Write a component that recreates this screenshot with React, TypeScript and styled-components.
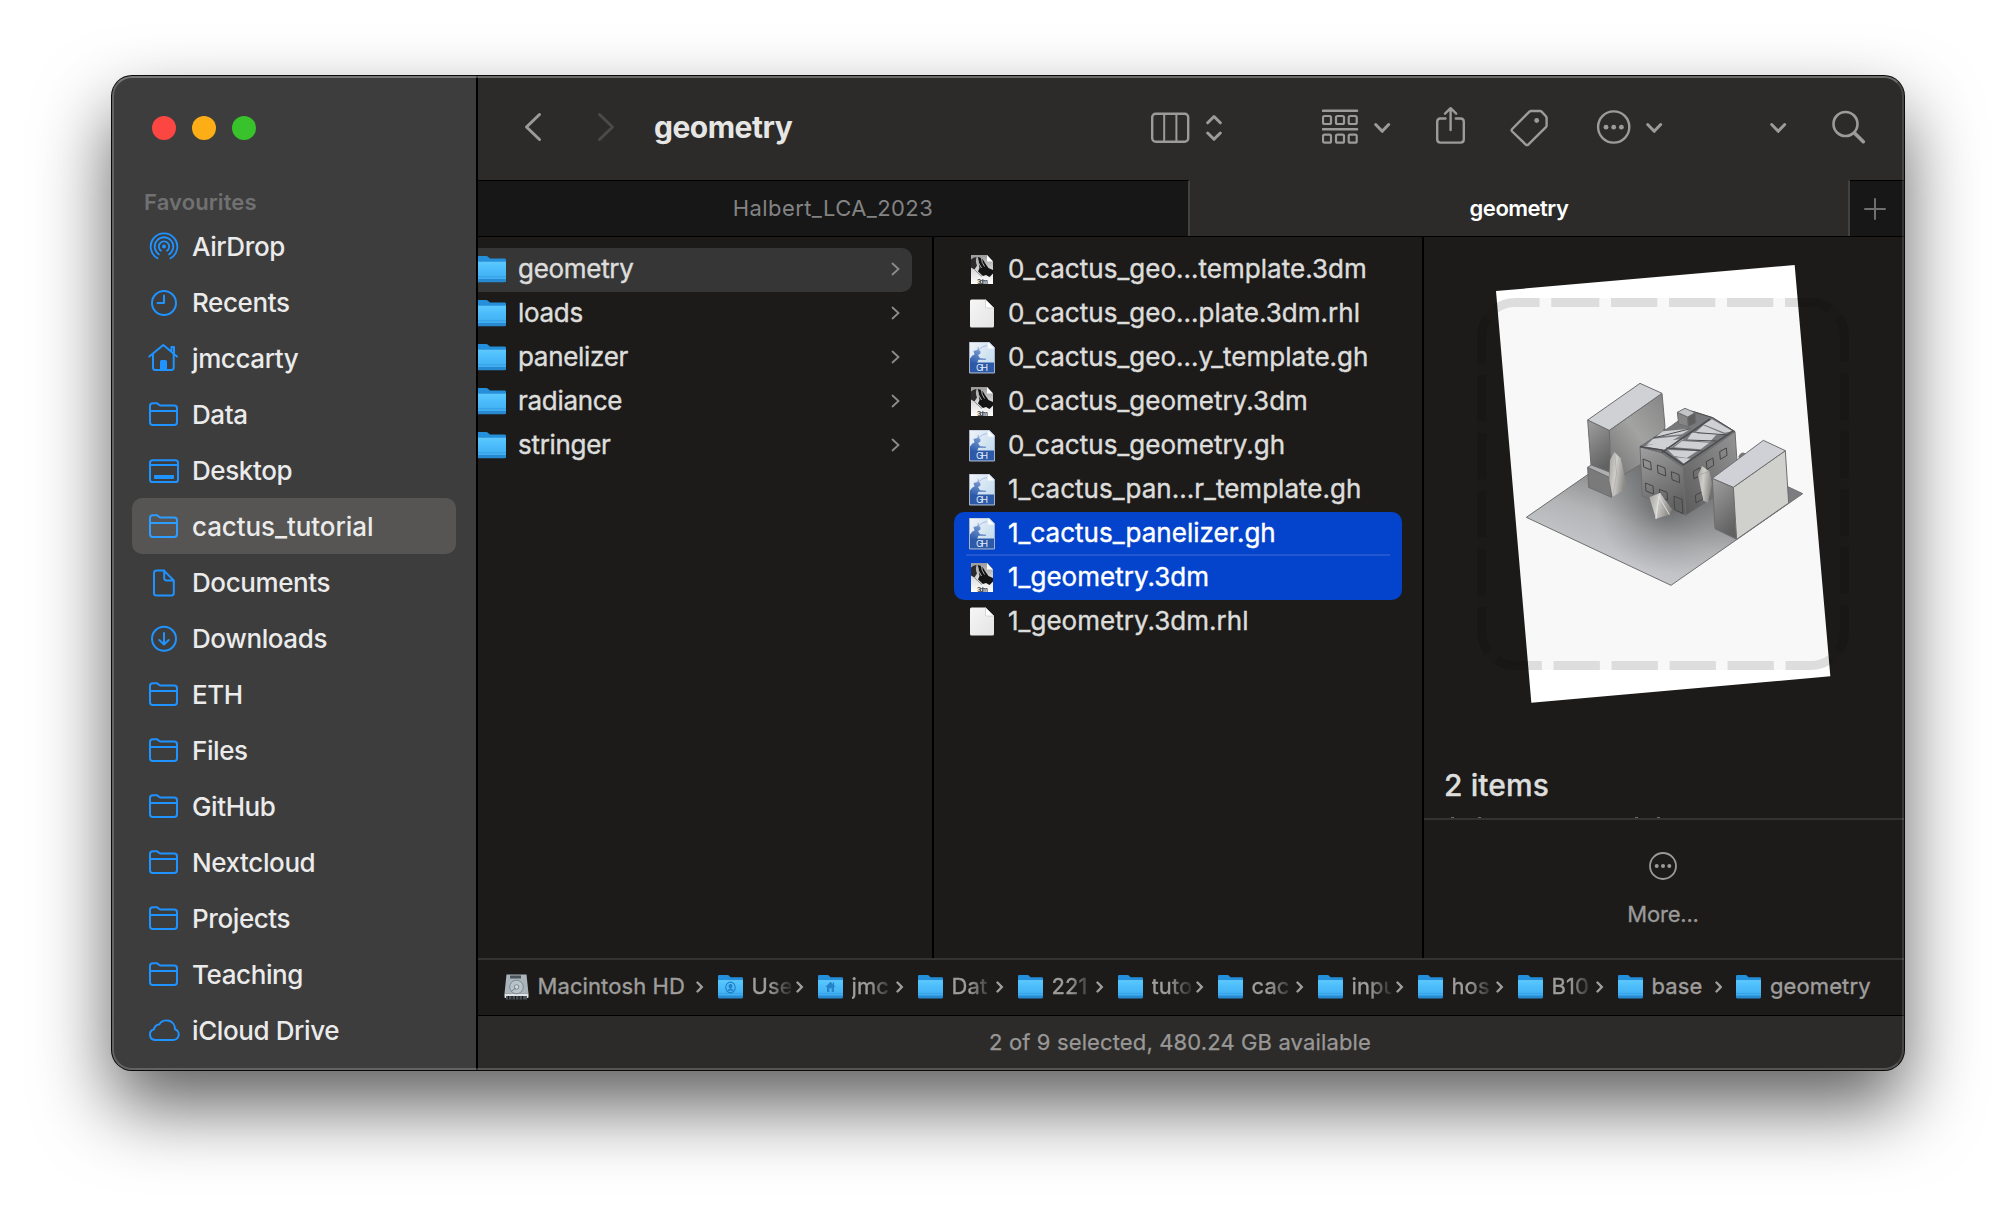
import React from "react";
import styled, { createGlobalStyle, css } from "styled-components";

const Global = createGlobalStyle`
  * { box-sizing: border-box; }
  html, body { margin: 0; background: #fff; }
  svg { display: block; flex: none; }
`;

const Desktop = styled.div`
  width: 2016px;
  height: 1218px;
  padding: 76px 112px 148px;
  overflow: hidden;
  background: #fff;
  font-family: Inter, "Liberation Sans", sans-serif;
  white-space: nowrap;
`;

const Window = styled.div`
  position: relative;
  display: flex;
  height: 994px;
  border-radius: 20px;
  background: #000;
  box-shadow: 0 0 0 1px #0a0a0a, 0 36px 74px rgba(0, 0, 0, 0.63);
  &::after {
    content: "";
    position: absolute;
    inset: 0;
    border-radius: 20px;
    border: 2px solid rgba(255, 255, 255, 0.13);
    border-top-color: rgba(255, 255, 255, 0.3);
    border-bottom-color: rgba(255, 255, 255, 0.2);
    border-left-color: rgba(255, 255, 255, 0.2);
    pointer-events: none;
  }
`;

/* ---------- sidebar ---------- */

const Sidebar = styled.nav`
  display: flex;
  flex-direction: column;
  width: 364px;
  margin-right: 2px;
  padding: 0 20px;
  background: #3d3d3d;
  border-radius: 20px 0 0 20px;
`;

const Lights = styled.div`
  display: flex;
  gap: 16px;
  padding: 40px 0 0 20px;
`;

const Light = styled.span<{ $color: string }>`
  width: 24px;
  height: 24px;
  border-radius: 50%;
  background: ${(p) => p.$color};
`;

const SectionLabel = styled.h2`
  margin: 47px 0 1px 12px;
  font-size: 22px;
  font-weight: 600;
  line-height: 30px;
  letter-spacing: 0.12px;
  color: #717171;
`;

const Place = styled.a<{ $active?: boolean }>`
  display: flex;
  align-items: center;
  gap: 12px;
  height: 56px;
  padding-left: 16px;
  border-radius: 10px;
  background: ${(p) => (p.$active ? "#565553" : "transparent")};
  color: #ebebeb;
  font-size: 26px;
  font-weight: 500;
  letter-spacing: ${(p) => (p.$active ? "-0.08px" : "-0.4px")};
  svg { color: ${(p) => (p.$active ? "#2d9dff" : "#1f93ff")}; }
`;

/* ---------- main area ---------- */

const Main = styled.main`
  display: flex;
  flex-direction: column;
  width: 1426px;
  border-radius: 0 20px 20px 0;
  overflow: hidden;
  background: #1c1b19;
`;

const Toolbar = styled.header`
  display: flex;
  align-items: center;
  height: 104px;
  padding: 0 37px 0 44px;
  background: #2c2b29;
  color: #9c9b99;
`;

const WindowTitle = styled.h1`
  flex: 1;
  margin: 0 0 2px 34px;
  font-size: 30px;
  font-weight: 700;
  letter-spacing: -0.5px;
  color: #e6e6e5;
`;

const ToolGroup = styled.div<{ $after: number; $gap?: number }>`
  display: flex;
  align-items: center;
  gap: ${(p) => p.$gap ?? 0}px;
  margin-right: ${(p) => p.$after}px;
`;

const TabBar = styled.div`
  display: grid;
  grid-template-columns: 712px 660px 54px;
  height: 57px;
  background: #2c2b29;
  border-bottom: 1px solid #000;
`;

const Tab = styled.div<{ $active?: boolean }>`
  display: flex;
  align-items: center;
  justify-content: center;
  padding-bottom: 2px;
  border-top: 1px solid #000;
  border-right: 2px solid #414140;
  background: #171717;
  font-size: 22px;
  letter-spacing: 0.4px;
  color: #838383;
  ${(p) =>
    p.$active &&
    css`
      border-top-color: #2c2b29;
      background: #2c2b29;
      color: #fff;
      font-weight: 600;
      letter-spacing: -0.5px;
    `}
`;

const NewTab = styled.button`
  display: flex;
  align-items: center;
  justify-content: center;
  padding: 0 4px 0 0;
  border: 0;
  border-top: 1px solid #000;
  background: #171717;
  color: #6f6f6e;
`;

const Browser = styled.section`
  display: grid;
  grid-template-columns: 454px 488px 1fr;
  gap: 2px;
  height: 721px;
  background: #000;
`;

const Column = styled.div`
  display: flex;
  flex-direction: column;
  padding-top: 11px;
  overflow: hidden;
  background: #1c1b19;
`;

const FolderRow = styled.div<{ $active?: boolean }>`
  display: flex;
  align-items: center;
  height: 44px;
  margin-right: 20px;
  padding: 0 12px 0 0;
  border-radius: 0 10px 10px 0;
  background: ${(p) => (p.$active ? "#363636" : "transparent")};
  color: #8c8c8b;
`;

const FolderGlyph = styled.span`
  margin: -1px 12px 0 -4px;
`;

const RowChevron = styled.svg`
  margin-bottom: 2px;
`;

const FolderName = styled.span`
  flex: 1;
  padding-bottom: 3px;
  font-size: 26px;
  letter-spacing: -0.3px;
  -webkit-text-stroke: 0.4px;
  color: #dddddc;
`;

const FileList = styled.div`
  padding: 0 20px;
`;

const FileRow = styled.div<{ $selected?: boolean; $first?: boolean; $last?: boolean }>`
  display: flex;
  align-items: center;
  gap: 13px;
  height: 44px;
  padding: 0 12px 0 15px;
  color: ${(p) => (p.$selected ? "#fff" : "#dddddc")};
  background: ${(p) => (p.$selected ? "#0443cb" : "transparent")};
  border-radius: ${(p) => `${p.$first ? "10px 10px" : "0 0"} ${p.$last ? "10px 10px" : "0 0"}`};
  ${(p) =>
    p.$first &&
    css`
      background: linear-gradient(#2257d0, #2257d0) 12px 42px / 424px 2px no-repeat #0443cb;
    `}
`;

const FileName = styled.span`
  padding-bottom: 3px;
  font-size: 26px;
  letter-spacing: 0.02px;
  -webkit-text-stroke: 0.4px;
`;

const Preview = styled.aside`
  display: flex;
  flex-direction: column;
  background: #1c1b19;
`;

const Summary = styled.div`
  display: flex;
  flex-direction: column;
  height: 583px;
  border-bottom: 2px solid #323231;
`;

const SummaryTitle = styled.div`
  flex: 1;
  padding: 30px 0 0 20px;
  font-size: 30px;
  font-weight: 500;
  line-height: 36px;
  letter-spacing: 0.1px;
  -webkit-text-stroke: 0.3px;
  color: #dededd;
`;

const Actions = styled.div`
  display: flex;
  flex: 1;
  flex-direction: column;
  align-items: center;
  gap: 19px;
  padding: 30px 2px 0 0;
  color: #9b9a99;
  font-size: 22px;
  letter-spacing: -0.2px;
  -webkit-text-stroke: 0.3px;
`;

const PathBar = styled.footer`
  display: flex;
  align-items: center;
  height: 58px;
  padding: 0 0 2px 25.5px;
  border-top: 2px solid #333331;
  border-bottom: 1px solid #000;
  color: #9f9e9d;
  font-size: 22px;
`;

const Crumb = styled.div`
  display: flex;
  align-items: center;
  margin-right: 14px;
`;

const CrumbName = styled.span<{ $width: number; $fade?: boolean }>`
  width: ${(p) => p.$width}px;
  margin: 0 5px 0 9px;
  padding-bottom: 2px;
  letter-spacing: 0.1px;
  -webkit-text-stroke: 0.35px;
  ${(p) =>
    p.$fade &&
    css`
      mask-image: linear-gradient(90deg, #000 45%, rgba(0, 0, 0, 0.15) 100%);
    `}
`;

const StatusBar = styled.footer`
  display: flex;
  flex: 1;
  align-items: center;
  justify-content: center;
  padding: 0 22px 2px 0;
  background: #2c2b29;
  font-size: 22px;
  letter-spacing: 0.13px;
  -webkit-text-stroke: 0.25px;
  color: #999897;
`;

/* ---------- icons ---------- */

type Kind = "airdrop" | "clock" | "home" | "folder" | "desktop" | "doc" | "down" | "cloud";

const placeShapes: Record<Kind, React.ReactNode> = {
  airdrop: (
    <g strokeWidth="1.8">
      <circle cx="16" cy="16.5" r="2" fill="currentColor" stroke="none" />
      <path d="M13 20.8A5.2 5.2 0 1 1 19 20.8" />
      <path d="M11 24.4A9.3 9.3 0 1 1 21 24.4" />
      <path d="M9.5 28.3A13.3 13.3 0 1 1 22.5 28.3" />
    </g>
  ),
  clock: (
    <>
      <circle cx="16" cy="17" r="12" />
      <path d="M16 9.5V17H9.5" />
    </>
  ),
  home: (
    <>
      <path d="M1.3 14.5 15.3 3 29 14.5M5 12v13.5Q5 28 7.500 28H23Q25.700 28 25.700 25.500V12M23.500 9V5H26v7" />
      <path d="M12 28V19.500Q12 18 13.500 18H17.500Q19 18 19 19.500V28Z" fill="currentColor" stroke="none" />
    </>
  ),
  folder: <path d="M2 13H29M2 8Q2 5.300 4.700 5.300H8.500C10.500 5.300 10.800 7.600 13 7.600H26.300Q29 7.600 29 10.300V24.300Q29 27 26.300 27H4.700Q2 27 2 24.300Z" />,
  desktop: (
    <>
      <rect x="2" y="6.200" width="28" height="21.800" rx="2.600" />
      <path d="M2 11H30" />
      <rect x="6" y="21" width="20" height="4" rx="1" fill="currentColor" stroke="none" />
    </>
  ),
  doc: <path d="M16 4.600H8.500Q6 4.600 6 7.100V27Q6 29.500 8.500 29.500H23.300Q25.800 29.500 25.800 27V14.500ZM16.200 4.600V12Q16.200 14.400 18.600 14.400H25.800" />,
  down: (
    <>
      <circle cx="16" cy="16.800" r="12" />
      <path d="M16 11V22.300M11.300 18 16 22.500 20.700 18" />
    </>
  ),
  cloud: <path d="M7 26H25A5.500 5.500 0 0 0 27 15.300A8.500 8.500 0 0 0 11.200 10.600A5 5 0 0 0 6 15.400A5.400 5.400 0 0 0 7 26Z" />,
};

const PlaceIcon = ({ kind }: { kind: Kind }) => (
  <svg width="32" height="32" viewBox="0 0 32 32" fill="none" stroke="currentColor" strokeWidth="2" strokeLinecap="round" strokeLinejoin="round">
    {placeShapes[kind]}
  </svg>
);

const ToolIcon = ({ x, w, sw = 2.4, children }: { x: number; w: number; sw?: number; children: React.ReactNode }) => (
  <svg width={w} height="44" viewBox={`${x} 106 ${w} 44`} fill="none" stroke="currentColor" strokeWidth={sw} strokeLinecap="round" strokeLinejoin="round">
    {children}
  </svg>
);

const MenuChevron = () => (
  <ToolIcon x={1374} w={17} sw={3}>
    <path d="M1375.700 124.500 1382.200 131.300 1388.700 124.500" />
  </ToolIcon>
);

const BlueFolder = ({ w, h, badge }: { w: number; h: number; badge?: "user" | "home" }) => (
  <svg width={w} height={h} viewBox="0 0 32 27" preserveAspectRatio="none">
    <defs>
      <linearGradient id="folderFront" x1="0" y1="0" x2="0" y2="1">
        <stop offset="0" stopColor="#5ac9ff" />
        <stop offset="0.350" stopColor="#4cbcfb" />
        <stop offset="1" stopColor="#3dabee" />
      </linearGradient>
    </defs>
    <path d="M1.500 0H12Q13.500 0 14.500 1.200L16 2.600H30.500Q32 2.600 32 4V25H0V1.500Q0 0 1.500 0Z" fill="#2490dc" />
    <path d="M0 6.200H32V24.500Q32 26 30.500 26H1.500Q0 26 0 24.500Z" fill="url(#folderFront)" />
    <path d="M0 6.200H32" stroke="#74d2ff" strokeWidth="0.700" />
    <path d="M0 20.800H32" stroke="#3197dc" strokeWidth="0.700" />
    <path d="M0 23H32V24.500Q32 26.300 30.500 26.300H1.500Q0 26.300 0 24.500Z" fill="#2789cf" />
    {badge === "user" && (
      <g fill="none" stroke="#1f7fc6" strokeWidth="1.400">
        <circle cx="16" cy="14" r="6" />
        <circle cx="16" cy="12.500" r="1.800" fill="#1f7fc6" />
        <path d="M13 17.300Q16 14.800 19 17.300" fill="#1f7fc6" />
      </g>
    )}
    {badge === "home" && <path d="M16 7.500 9.500 13.500H11.500V19H14.500V15H17.500V19H20.500V13.500H22.500L20.500 11.500V8.500H19V10Z" fill="#2583ca" />}
  </svg>
);

const DiskIcon = () => (
  <svg width="25" height="26" viewBox="0 0 25 26">
    <path d="M2.500 0.500H22.500L24.500 19.500H0.500Z" fill="#a9b4bb" />
    <path d="M0.500 19.500H24.500V23Q24.500 24 23.500 24H1.500Q0.500 24 0.500 23Z" fill="#dfe5e8" />
    <path d="M2 22H23V25.500H2Z" fill="#4d5459" />
    <path d="M4.500 22V25.500M8 22V25.500M11.500 22V25.500M15 22V25.500M18.500 22V25.500" stroke="#15171a" strokeWidth="1.200" />
    <rect x="6" y="1.500" width="11" height="3" rx="0.500" fill="#4a5359" />
    <circle cx="12.500" cy="13" r="6.800" fill="#b9c4ca" stroke="#7d8990" strokeWidth="1" />
    <circle cx="12.500" cy="13" r="2.300" fill="#cfd8dc" stroke="#7d8990" strokeWidth="1" />
    <path d="M7 17.500 12 14" stroke="#75828a" strokeWidth="1" />
  </svg>
);

type FileKind = "3dm" | "rhl" | "gh";

const FileIcon = ({ kind }: { kind: FileKind }) => (
  <svg width="26" height="32" viewBox="0 0.5 26 32">
    <defs>
      <linearGradient id="paper" x1="0" y1="0" x2="1" y2="1">
        <stop offset="0" stopColor="#f6f6f6" />
        <stop offset="1" stopColor="#e4e4e4" />
      </linearGradient>
      <linearGradient id="rhino" x1="0" y1="0" x2="0" y2="1">
        <stop offset="0" stopColor="#9a9a9a" />
        <stop offset="0.600" stopColor="#e2e2e2" />
        <stop offset="1" stopColor="#ffffff" />
      </linearGradient>
      <linearGradient id="hopper" x1="0" y1="0" x2="1" y2="1">
        <stop offset="0" stopColor="#f0f4fb" />
        <stop offset="1" stopColor="#b9d6ea" />
      </linearGradient>
      <linearGradient id="hopperBody" x1="0.600" y1="0" x2="0.200" y2="1">
        <stop offset="0" stopColor="#8aa6d6" />
        <stop offset="1" stopColor="#315fae" />
      </linearGradient>
    </defs>
    {kind === "rhl" && (
      <>
        <path d="M2.500 2H16.500L25 10.500V28.500Q25 30 23.500 30H2.500Q1 30 1 28.500V3.500Q1 2 2.500 2Z" fill="url(#paper)" />
        <path d="M16.500 2V9.500Q16.500 10.500 17.500 10.500H25Z" fill="#fff" stroke="#bdbdbd" strokeWidth="0.600" />
      </>
    )}
    {kind === "3dm" && (
      <>
        <path d="M2 1.500H18L24 8V30.500H2Z" fill="url(#rhino)" />
        <path d="M18 1.500V8H24Z" fill="#fff" />
        <path d="M2 6Q4 3.500 7.500 3.500Q6 8 8 12L5.500 16L2 14Z" fill="#2b2b2b" />
        <path d="M8.500 3.500Q13.500 3.500 16 9.500L19.500 14.500L24 16.500V20L20.500 23.500L17 21.500L14 22.500L9 18L10.500 14.500Q9.500 8 8.500 3.500Z" fill="#141414" />
        <path d="M8.500 4Q8.500 9 12.500 14.500M12.500 4.500Q12.500 9 15.500 13" stroke="#bdbdbd" strokeWidth="0.900" fill="none" />
        <path d="M5.500 16Q9 20 13 23" stroke="#8a8a8a" strokeWidth="1" fill="none" />
        <text x="8" y="30" fontSize="6.500" fontWeight="700" fill="#4a4a4a" fontFamily="Inter, sans-serif" textLength="11">3dm</text>
      </>
    )}
    {kind === "gh" && (
      <>
        <path d="M0.500 0.500H20L25.500 6V31.500H0.500Z" fill="url(#hopper)" stroke="#a9b3c8" />
        <path d="M19 1V7H25Z" fill="#fff" />
        <path d="M1 17Q3 13.500 5.500 13L4.500 9.500L8.500 8.500L9 4.500L10 8.500Q12.500 10 11 12.500L9 13.500L11 16.800L17 17.300V18.300L9.500 18.300L8 21.500H1Z" fill="url(#hopperBody)" />
        <path d="M9.500 8.500Q13 4.500 18 4" stroke="#9fb5da" strokeWidth="0.800" fill="none" />
        <rect x="1" y="21" width="24" height="10" fill="#2c5aa9" />
        <text x="7" y="29.200" fontSize="9.500" fill="#e3ebf7" fontFamily="Inter, sans-serif" textLength="12">GH</text>
      </>
    )}
  </svg>
);

/* Window quads of the middle house, given by their top-left corner. */
const frontWindows = [[669, 657], [712, 675], [754, 695], [676, 729], [718, 748]];
const sideWindows = [[897, 627], [857, 657], [818, 686], [824, 758]];

const ModelPreview = () => (
  <svg width="480" height="500" viewBox="12 -9 1440 1500">
    <defs>
      <linearGradient id="ground" gradientUnits="userSpaceOnUse" x1="620" y1="1000" x2="720" y2="700">
        <stop offset="0" stopColor="#c9cacd" />
        <stop offset="0.450" stopColor="#b3b4b6" />
        <stop offset="1" stopColor="#77787a" />
      </linearGradient>
      <radialGradient id="groundShade" gradientUnits="userSpaceOnUse" cx="740" cy="790" r="210">
        <stop offset="0" stopColor="#3e3f40" stopOpacity="0.600" />
        <stop offset="1" stopColor="#77787a" stopOpacity="0" />
      </radialGradient>
      <linearGradient id="wallDark" x1="0" y1="0" x2="0.400" y2="1">
        <stop offset="0" stopColor="#a0a0a0" />
        <stop offset="1" stopColor="#626262" />
      </linearGradient>
      <linearGradient id="wallMid" x1="1" y1="0" x2="0.200" y2="1">
        <stop offset="0" stopColor="#848484" />
        <stop offset="0.500" stopColor="#a3a3a2" />
        <stop offset="1" stopColor="#747474" />
      </linearGradient>
      <linearGradient id="houseSide" x1="1" y1="0" x2="0" y2="1">
        <stop offset="0" stopColor="#959595" />
        <stop offset="1" stopColor="#5a5a5a" />
      </linearGradient>
      <linearGradient id="tree" x1="0" y1="0" x2="1" y2="0.300">
        <stop offset="0" stopColor="#a3a29c" />
        <stop offset="0.450" stopColor="#cfceca" />
        <stop offset="1" stopColor="#8b8a86" />
      </linearGradient>
    </defs>

    <path d="M228 153 1124 75 1231 1309 334 1388Z" fill="#fff" />
    <rect x="171" y="174" width="1116" height="1116" rx="114" fill="#000" fillOpacity="0.028" />

    <g stroke="#6d6d6f" strokeWidth="3" strokeLinejoin="round">
      <path d="M319 832 753 1036 1148 761 714 557Z" fill="url(#ground)" />
      <path d="M319 832 753 1036 1148 761 714 557Z" fill="url(#groundShade)" stroke="none" />
      <path d="M1105 742 1148 761 1107 789Z" fill="#7c7d80" stroke="none" />
      <path d="M955 650Q966 630 978 642L960 660Z" fill="#777" stroke="none" />

      <path d="M503 540 568 571 572 700 513 676Z" fill="url(#wallDark)" />
      <path d="M568 571 726 460 735 560 700 650 615 702 575 740Z" fill="url(#wallMid)" />
      <path d="M503 540 660 430 726 460 568 571Z" fill="#d0d1d5" />
      <path d="M503 682 570 713 575 772 506 742Z" fill="#7a7a7a" />
      <path d="M503 682 514 675 568 696 570 713Z" fill="#aeafb1" />
      <path d="M583 636 602 655 618 725 616 748 578 770 568 720 570 660Z" fill="url(#tree)" stroke="none" />
      <path d="M583 636 590 700 578 770" stroke="#a9a8a3" strokeWidth="2" fill="none" />

      <path d="M660 620 725 638 790 683 797 826 667 768Z" fill="url(#wallDark)" />
      <path d="M790 683 945 575 951 665 876 775 797 826Z" fill="url(#houseSide)" />
      <path d="M660 620 755 557 815 513 878 533 945 575 790 683 725 638Z" fill="#77787a" />
      <g fill="#cfd0d3" stroke="none">
        <path d="M728 574 812 566 786 583 708 590Z" />
        <path d="M700 596 780 588 748 606 680 615Z" />
        <path d="M740 602 792 596 742 630 668 620Z" />
        <path d="M876 538 938 574 914 578 850 553Z" />
        <path d="M850 556 912 582 880 586 828 576Z" />
        <path d="M816 578 890 583 870 605 800 601Z" />
        <path d="M786 603 868 608 842 628 762 622Z" />
        <path d="M744 630 832 633 800 654 762 648Z" />
        <path d="M768 652 812 656 792 671Z" />
      </g>
      <g fill="none" stroke="#4c4d4f">
        <path d="M725 638 870 537M660 620 725 630 790 675 940 572" strokeWidth="5" />
        <path d="M820 515 878 533 945 575M700 594 812 566M738 624 850 633M800 600 890 603M830 578 925 585" />
      </g>
      <path d="M772 517 803 531 805 560 776 552Z" fill="#858585" />
      <path d="M803 531 825 518 828 548 805 560Z" fill="#5f5f5f" />
      <path d="M772 517 795 505 825 518 803 531Z" fill="#c4c5c8" />

      <g fill="none" stroke="#454545">
        {frontWindows.map(([x, y]) => (
          <path key={`${x}-${y}`} d={`M${x} ${y}l23 9 2 24-23-9Z`} />
        ))}
        {sideWindows.map(([x, y]) => (
          <path key={`${x}-${y}`} d={`M${x + 2} ${y + 8}l20-11 2 22-20 12Z`} />
        ))}
        <path d="M762 769 786 778 789 821 764 809Z" />
      </g>
      <path d="M846 678 868 694 876 730 864 788 850 782 834 705Z" fill="url(#tree)" stroke="none" />
      <path d="M868 694 852 700 834 705" stroke="#a09f9b" strokeWidth="2" fill="none" />
      <path d="M688 772 720 759 756 808 748 824 708 836Z" fill="url(#tree)" stroke="none" />
      <path d="M720 759 712 800 708 836 716 768 748 824" stroke="#deddd9" strokeWidth="3" fill="none" />

      <path d="M877 715 940 742 950 898 885 866Z" fill="url(#wallDark)" />
      <path d="M940 742 1096 632 1106 789 950 898Z" fill="#d0d0cd" />
      <path d="M877 715 1030 601 1096 632 940 742Z" fill="#d0d1d6" />
    </g>

    <path
      d="M399 187.500H1173A100 100 0 0 1 1273 287.500V1176.500A100 100 0 0 1 1173 1276.500H285A100 100 0 0 1 185 1176.500V287.500A100 100 0 0 1 285 187.500H399"
      fill="none"
      stroke="#000"
      strokeOpacity="0.105"
      strokeWidth="27"
      strokeDasharray="139 35"
    />
  </svg>
);

/* ---------- data ---------- */

const places: [string, Kind][] = [
  ["AirDrop", "airdrop"],
  ["Recents", "clock"],
  ["jmccarty", "home"],
  ["Data", "folder"],
  ["Desktop", "desktop"],
  ["cactus_tutorial", "folder"],
  ["Documents", "doc"],
  ["Downloads", "down"],
  ["ETH", "folder"],
  ["Files", "folder"],
  ["GitHub", "folder"],
  ["Nextcloud", "folder"],
  ["Projects", "folder"],
  ["Teaching", "folder"],
  ["iCloud Drive", "cloud"],
];

const folders = ["geometry", "loads", "panelizer", "radiance", "stringer"];

const files: [string, FileKind][] = [
  ["0_cactus_geo...template.3dm", "3dm"],
  ["0_cactus_geo...plate.3dm.rhl", "rhl"],
  ["0_cactus_geo...y_template.gh", "gh"],
  ["0_cactus_geometry.3dm", "3dm"],
  ["0_cactus_geometry.gh", "gh"],
  ["1_cactus_pan...r_template.gh", "gh"],
  ["1_cactus_panelizer.gh", "gh"],
  ["1_geometry.3dm", "3dm"],
  ["1_geometry.3dm.rhl", "rhl"],
];

interface CrumbData { name: string; width: number; fade?: boolean; badge?: "user" | "home"; disk?: boolean }
const crumbs: CrumbData[] = [
  { name: "Macintosh HD", width: 153.5, disk: true },
  { name: "Use", width: 39.5, fade: true, badge: "user" },
  { name: "jmc", width: 39.5, fade: true, badge: "home" },
  { name: "Dat", width: 39.5, fade: true },
  { name: "221", width: 39.5, fade: true },
  { name: "tuto", width: 39.5, fade: true },
  { name: "cac", width: 39.5, fade: true },
  { name: "inpu", width: 39.5, fade: true },
  { name: "hos", width: 39.5, fade: true },
  { name: "B10", width: 39.5, fade: true },
  { name: "base", width: 58 },
  { name: "geometry", width: 104 },
];

export default function App() {
  return (
    <Desktop>
      <Global />
      <Window>
        <Sidebar>
          <Lights>
            <Light $color="#fb4642" />
            <Light $color="#fdae17" />
            <Light $color="#38c22b" />
          </Lights>
          <SectionLabel>Favourites</SectionLabel>
          {places.map(([name, kind]) => (
            <Place key={name} $active={name === "cactus_tutorial"}>
              <PlaceIcon kind={kind} />
              {name}
            </Place>
          ))}
        </Sidebar>

        <Main>
          <Toolbar>
            <ToolGroup $after={0} $gap={48}>
              <ToolIcon x={522} w={25} sw={3}>
                <path d="M539.500 114.500 526.500 127 539.500 139.500" />
              </ToolIcon>
              <ToolIcon x={595} w={25} sw={3}>
                <path d="M599.500 114.500 612.500 127 599.500 139.500" stroke="#4b4a48" />
              </ToolIcon>
            </ToolGroup>
            <WindowTitle>geometry</WindowTitle>
            <ToolGroup $after={99} $gap={16}>
              <ToolIcon x={1150} w={40}>
                <rect x="1152.200" y="113.700" width="36" height="28" rx="3.500" />
                <path d="M1164.200 114V141M1176.400 114V141" strokeWidth="2" />
              </ToolIcon>
              <ToolIcon x={1206} w={17} sw={3}>
                <path d="M1207.700 122.800 1214 116.500 1220.300 122.800M1207.700 133 1214 139.300 1220.300 133" />
              </ToolIcon>
            </ToolGroup>
            <ToolGroup $after={43} $gap={15}>
              <ToolIcon x={1322} w={37} sw={2.2}>
                <path d="M1323 110.700H1357M1323 129.300H1357" strokeWidth="2.600" />
                {[1323, 1336, 1348.7].map((x) => (
                  <g key={x}>
                    <rect x={x} y="116" width="8" height="8" rx="1.500" />
                    <rect x={x} y="134.700" width="8" height="8" rx="1.500" />
                  </g>
                ))}
              </ToolIcon>
              <MenuChevron />
            </ToolGroup>
            <ToolGroup $after={43} $gap={43}>
              <ToolIcon x={1434} w={33}>
                <path d="M1445.500 118.500H1440.500Q1437.200 118.500 1437.200 121.800V139.300Q1437.200 142.600 1440.500 142.600H1460.500Q1463.800 142.600 1463.800 139.300V121.800Q1463.800 118.500 1460.500 118.500H1455.800" />
                <path d="M1450.600 130V108.500M1445 113.700 1450.600 108.200 1456.200 113.700" />
              </ToolIcon>
              <ToolIcon x={1510} w={39} sw={2.4}>
                <path d="M1531 111H1540Q1541 111 1541.600 111.600L1545.900 116.200Q1546.600 117 1546.600 118V125.500Q1546.600 126.500 1545.900 127.200L1528.500 144.300Q1527 145.800 1525.500 144.300L1512.200 131.500Q1511 130.200 1512.200 129L1529.200 111.800Q1530 111 1531 111Z" />
                <circle cx="1536.700" cy="120.500" r="2.400" fill="currentColor" stroke="none" />
              </ToolIcon>
            </ToolGroup>
            <ToolGroup $after={107} $gap={13}>
              <ToolIcon x={1592} w={41}>
                <circle cx="1613.700" cy="127" r="15.600" />
                {[1606, 1613.7, 1621.4].map((x) => (
                  <circle key={x} cx={x} cy="127.200" r="2.400" fill="currentColor" stroke="none" />
                ))}
              </ToolIcon>
              <MenuChevron />
            </ToolGroup>
            <ToolGroup $after={0} $gap={44}>
              <MenuChevron />
              <ToolIcon x={1831} w={36} sw={2.6}>
                <circle cx="1845.500" cy="124" r="12" />
                <path d="M1854.500 133 1863.300 141.700" strokeWidth="3.600" />
              </ToolIcon>
            </ToolGroup>
          </Toolbar>

          <TabBar>
            <Tab>Halbert_LCA_2023</Tab>
            <Tab $active>geometry</Tab>
            <NewTab>
              <svg width="22" height="22" viewBox="0 0 22 22" stroke="currentColor" strokeWidth="2" strokeLinecap="round">
                <path d="M11 1V21M1 11H21" />
              </svg>
            </NewTab>
          </TabBar>

          <Browser>
            <Column>
              {folders.map((name, i) => (
                <FolderRow key={name} $active={i === 0}>
                  <FolderGlyph>
                    <BlueFolder w={32} h={27} />
                  </FolderGlyph>
                  <FolderName>{name}</FolderName>
                  <RowChevron width="9" height="14" viewBox="0 0 9 14" fill="none" stroke="currentColor" strokeWidth="1.800" strokeLinecap="round">
                    <path d="M1.500 1.500 7.500 7 1.500 12.500" />
                  </RowChevron>
                </FolderRow>
              ))}
            </Column>
            <Column>
              <FileList>
                {files.map(([name, kind], i) => (
                  <FileRow key={name} $selected={i === 6 || i === 7} $first={i === 6} $last={i === 7}>
                    <FileIcon kind={kind} />
                    <FileName>{name}</FileName>
                  </FileRow>
                ))}
              </FileList>
            </Column>
            <Preview>
              <Summary>
                <ModelPreview />
                <SummaryTitle>2 items</SummaryTitle>
                <svg width="480" height="1" viewBox="0 0 480 1" fill="#6a6a69">
                  <path d="M27 0h3v1h-3zM54 0h3v1h-3zM211 0h3v1h-3zM233 0h3v1h-3z" />
                </svg>
              </Summary>
              <Actions>
                <svg width="32" height="32" viewBox="0 0 32 32" fill="none" stroke="currentColor" strokeWidth="1.800">
                  <circle cx="16" cy="16" r="13" />
                  <g fill="currentColor" stroke="none">
                    <circle cx="9.700" cy="16" r="2" />
                    <circle cx="16" cy="16" r="2" />
                    <circle cx="22.300" cy="16" r="2" />
                  </g>
                </svg>
                More...
              </Actions>
            </Preview>
          </Browser>

          <PathBar>
            {crumbs.map((c, i) => (
              <Crumb key={c.name}>
                {c.disk ? <DiskIcon /> : <BlueFolder w={25} h={24} badge={c.badge} />}
                <CrumbName $width={c.width} $fade={c.fade}>{c.name}</CrumbName>
                {i < crumbs.length - 1 && (
                  <svg width="7.500" height="14" viewBox="0 0 7.500 14" fill="none" stroke="currentColor" strokeWidth="2.400" strokeLinecap="round">
                    <path d="M1.500 2.500 5.800 7 1.500 11.500" />
                  </svg>
                )}
              </Crumb>
            ))}
          </PathBar>
          <StatusBar>2 of 9 selected, 480.24 GB available</StatusBar>
        </Main>
      </Window>
    </Desktop>
  );
}
